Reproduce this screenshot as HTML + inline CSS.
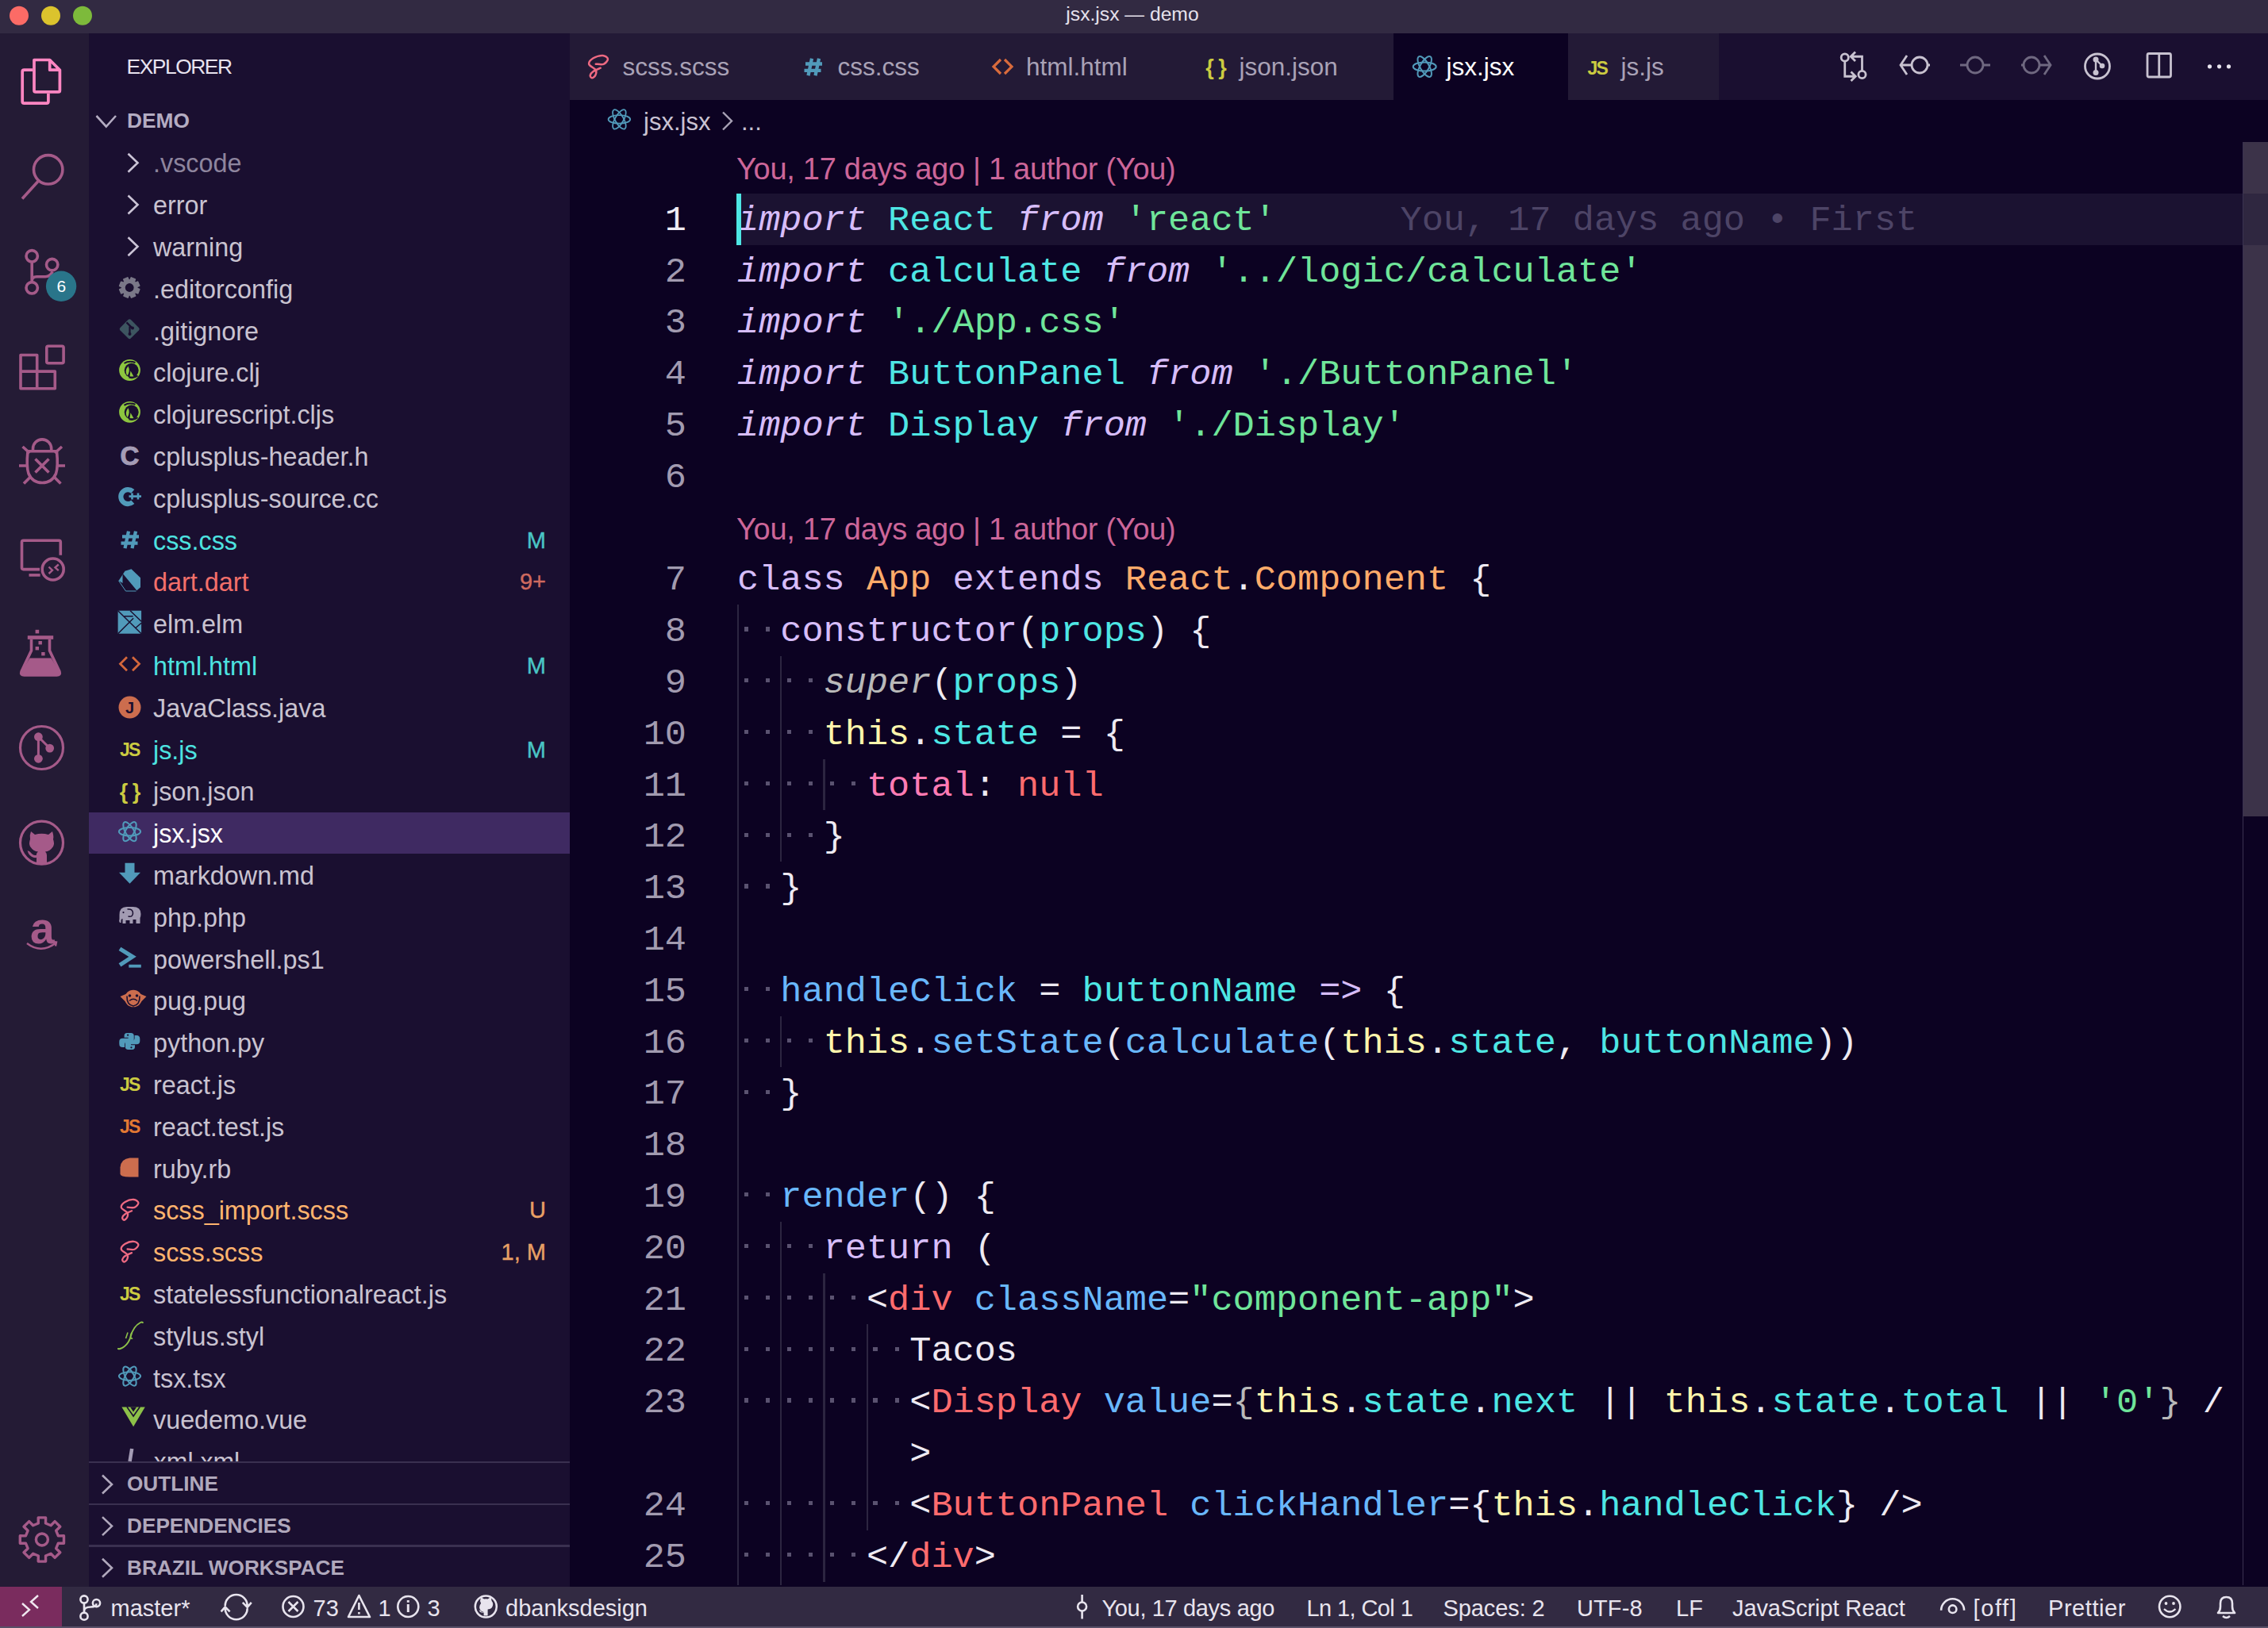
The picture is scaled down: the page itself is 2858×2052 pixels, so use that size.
<!DOCTYPE html><html><head><meta charset="utf-8"><title>jsx.jsx — demo</title><style>
html,body{margin:0;padding:0;background:#0c0222;}body{width:2858px;height:2052px;position:relative;overflow:hidden;font-family:"Liberation Sans",sans-serif;}
</style></head><body>
<div style="position:absolute;left:0.00px;top:0.00px;width:2858.00px;height:42.00px;background:#322a42;"></div>
<div style="position:absolute;left:1343.30px;top:4.44px;font-family:'Liberation Sans', sans-serif;font-size:24.70px;line-height:27.59px;color:#e6e1ec;white-space:pre;">jsx.jsx — demo</div>
<div style="position:absolute;left:0.00px;top:42.00px;width:112.00px;height:1958.00px;background:#241b35;"></div>
<div style="position:absolute;left:112.00px;top:42.00px;width:606.00px;height:1958.00px;background:#1a0f30;"></div>
<div style="position:absolute;left:718.00px;top:42.00px;width:2140.00px;height:1958.00px;background:#0c0222;"></div>
<div style="position:absolute;left:718.00px;top:42.00px;width:2140.00px;height:84.00px;background:#1a0f30;"></div>
<div style="position:absolute;left:0.00px;top:2000.00px;width:2858.00px;height:52.00px;background:#322a42;"></div>
<div style="position:absolute;left:0.00px;top:2000.00px;width:78.00px;height:52.00px;background:#7a2c5e;"></div>
<div style="position:absolute;left:0.00px;top:2050.00px;width:2858.00px;height:2.00px;background:#585068;"></div>
<div style="position:absolute;left:159.50px;top:70.40px;font-family:'Liberation Sans', sans-serif;font-size:26.40px;line-height:29.49px;color:#e8e3ef;white-space:pre;letter-spacing:-1.45px;">EXPLORER</div>
<div style="position:absolute;left:160.00px;top:138.39px;font-family:'Liberation Sans', sans-serif;font-size:26.30px;line-height:29.38px;color:#b4acc2;white-space:pre;font-weight:700;">DEMO</div>
<div style="position:absolute;left:112px;top:178.8px;width:606px;height:1663.2px;overflow:hidden">
<div style="position:absolute;left:0;top:845.00px;width:606px;height:52px;background:#3f2a62"></div>
</div>
<div style="position:absolute;left:193.00px;top:188.31px;font-family:'Liberation Sans', sans-serif;font-size:32.35px;line-height:36.14px;color:#8e859e;white-space:pre;">.vscode</div>
<div style="position:absolute;left:193.00px;top:241.11px;font-family:'Liberation Sans', sans-serif;font-size:32.35px;line-height:36.14px;color:#c9c3d0;white-space:pre;">error</div>
<div style="position:absolute;left:193.00px;top:293.91px;font-family:'Liberation Sans', sans-serif;font-size:32.35px;line-height:36.14px;color:#c9c3d0;white-space:pre;">warning</div>
<div style="position:absolute;left:193.00px;top:346.71px;font-family:'Liberation Sans', sans-serif;font-size:32.35px;line-height:36.14px;color:#c9c3d0;white-space:pre;">.editorconfig</div>
<div style="position:absolute;left:193.00px;top:399.51px;font-family:'Liberation Sans', sans-serif;font-size:32.35px;line-height:36.14px;color:#c9c3d0;white-space:pre;">.gitignore</div>
<div style="position:absolute;left:193.00px;top:452.31px;font-family:'Liberation Sans', sans-serif;font-size:32.35px;line-height:36.14px;color:#c9c3d0;white-space:pre;">clojure.clj</div>
<div style="position:absolute;left:193.00px;top:505.11px;font-family:'Liberation Sans', sans-serif;font-size:32.35px;line-height:36.14px;color:#c9c3d0;white-space:pre;">clojurescript.cljs</div>
<div style="position:absolute;left:193.00px;top:557.91px;font-family:'Liberation Sans', sans-serif;font-size:32.35px;line-height:36.14px;color:#c9c3d0;white-space:pre;">cplusplus-header.h</div>
<div style="position:absolute;left:193.00px;top:610.71px;font-family:'Liberation Sans', sans-serif;font-size:32.35px;line-height:36.14px;color:#c9c3d0;white-space:pre;">cplusplus-source.cc</div>
<div style="position:absolute;left:193.00px;top:663.51px;font-family:'Liberation Sans', sans-serif;font-size:32.35px;line-height:36.14px;color:#4de3e0;white-space:pre;">css.css</div>
<div style="position:absolute;right:2170.00px;top:664.55px;font-family:'Liberation Sans', sans-serif;font-size:29px;line-height:32.40px;color:#4ac5c5;white-space:pre;-webkit-text-stroke:0.35px #4ac5c5">M</div>
<div style="position:absolute;left:193.00px;top:716.31px;font-family:'Liberation Sans', sans-serif;font-size:32.35px;line-height:36.14px;color:#f36f6a;white-space:pre;">dart.dart</div>
<div style="position:absolute;right:2170.00px;top:717.35px;font-family:'Liberation Sans', sans-serif;font-size:29px;line-height:32.40px;color:#cf6a5f;white-space:pre;-webkit-text-stroke:0.35px #cf6a5f">9+</div>
<div style="position:absolute;left:193.00px;top:769.11px;font-family:'Liberation Sans', sans-serif;font-size:32.35px;line-height:36.14px;color:#c9c3d0;white-space:pre;">elm.elm</div>
<div style="position:absolute;left:193.00px;top:821.91px;font-family:'Liberation Sans', sans-serif;font-size:32.35px;line-height:36.14px;color:#4de3e0;white-space:pre;">html.html</div>
<div style="position:absolute;right:2170.00px;top:822.95px;font-family:'Liberation Sans', sans-serif;font-size:29px;line-height:32.40px;color:#4ac5c5;white-space:pre;-webkit-text-stroke:0.35px #4ac5c5">M</div>
<div style="position:absolute;left:193.00px;top:874.71px;font-family:'Liberation Sans', sans-serif;font-size:32.35px;line-height:36.14px;color:#c9c3d0;white-space:pre;">JavaClass.java</div>
<div style="position:absolute;left:193.00px;top:927.51px;font-family:'Liberation Sans', sans-serif;font-size:32.35px;line-height:36.14px;color:#4de3e0;white-space:pre;">js.js</div>
<div style="position:absolute;right:2170.00px;top:928.55px;font-family:'Liberation Sans', sans-serif;font-size:29px;line-height:32.40px;color:#4ac5c5;white-space:pre;-webkit-text-stroke:0.35px #4ac5c5">M</div>
<div style="position:absolute;left:193.00px;top:980.31px;font-family:'Liberation Sans', sans-serif;font-size:32.35px;line-height:36.14px;color:#c9c3d0;white-space:pre;">json.json</div>
<div style="position:absolute;left:193.00px;top:1033.11px;font-family:'Liberation Sans', sans-serif;font-size:32.35px;line-height:36.14px;color:#ffffff;white-space:pre;">jsx.jsx</div>
<div style="position:absolute;left:193.00px;top:1085.91px;font-family:'Liberation Sans', sans-serif;font-size:32.35px;line-height:36.14px;color:#c9c3d0;white-space:pre;">markdown.md</div>
<div style="position:absolute;left:193.00px;top:1138.71px;font-family:'Liberation Sans', sans-serif;font-size:32.35px;line-height:36.14px;color:#c9c3d0;white-space:pre;">php.php</div>
<div style="position:absolute;left:193.00px;top:1191.51px;font-family:'Liberation Sans', sans-serif;font-size:32.35px;line-height:36.14px;color:#c9c3d0;white-space:pre;">powershell.ps1</div>
<div style="position:absolute;left:193.00px;top:1244.31px;font-family:'Liberation Sans', sans-serif;font-size:32.35px;line-height:36.14px;color:#c9c3d0;white-space:pre;">pug.pug</div>
<div style="position:absolute;left:193.00px;top:1297.11px;font-family:'Liberation Sans', sans-serif;font-size:32.35px;line-height:36.14px;color:#c9c3d0;white-space:pre;">python.py</div>
<div style="position:absolute;left:193.00px;top:1349.91px;font-family:'Liberation Sans', sans-serif;font-size:32.35px;line-height:36.14px;color:#c9c3d0;white-space:pre;">react.js</div>
<div style="position:absolute;left:193.00px;top:1402.71px;font-family:'Liberation Sans', sans-serif;font-size:32.35px;line-height:36.14px;color:#c9c3d0;white-space:pre;">react.test.js</div>
<div style="position:absolute;left:193.00px;top:1455.51px;font-family:'Liberation Sans', sans-serif;font-size:32.35px;line-height:36.14px;color:#c9c3d0;white-space:pre;">ruby.rb</div>
<div style="position:absolute;left:193.00px;top:1508.31px;font-family:'Liberation Sans', sans-serif;font-size:32.35px;line-height:36.14px;color:#ffb46e;white-space:pre;">scss_import.scss</div>
<div style="position:absolute;right:2170.00px;top:1509.35px;font-family:'Liberation Sans', sans-serif;font-size:29px;line-height:32.40px;color:#e8a065;white-space:pre;-webkit-text-stroke:0.35px #e8a065">U</div>
<div style="position:absolute;left:193.00px;top:1561.11px;font-family:'Liberation Sans', sans-serif;font-size:32.35px;line-height:36.14px;color:#ffb46e;white-space:pre;">scss.scss</div>
<div style="position:absolute;right:2170.00px;top:1562.15px;font-family:'Liberation Sans', sans-serif;font-size:29px;line-height:32.40px;color:#e8a065;white-space:pre;-webkit-text-stroke:0.35px #e8a065">1, M</div>
<div style="position:absolute;left:193.00px;top:1613.91px;font-family:'Liberation Sans', sans-serif;font-size:32.35px;line-height:36.14px;color:#c9c3d0;white-space:pre;">statelessfunctionalreact.js</div>
<div style="position:absolute;left:193.00px;top:1666.71px;font-family:'Liberation Sans', sans-serif;font-size:32.35px;line-height:36.14px;color:#c9c3d0;white-space:pre;">stylus.styl</div>
<div style="position:absolute;left:193.00px;top:1719.51px;font-family:'Liberation Sans', sans-serif;font-size:32.35px;line-height:36.14px;color:#c9c3d0;white-space:pre;">tsx.tsx</div>
<div style="position:absolute;left:193.00px;top:1772.31px;font-family:'Liberation Sans', sans-serif;font-size:32.35px;line-height:36.14px;color:#c9c3d0;white-space:pre;">vuedemo.vue</div>
<div style="position:absolute;left:112px;top:1815.60px;width:606px;height:26.40px;overflow:hidden">
<div style="position:absolute;left:81.8px;top:9.83px;font-family:'Liberation Sans', sans-serif;font-size:32px;line-height:35.75px;color:#c9c3d0;white-space:pre">xml.xml</div>
</div>
<div style="position:absolute;left:112.00px;top:1842.00px;width:606.00px;height:52.60px;background:#1a0f30;"></div>
<div style="position:absolute;left:112.00px;top:1842.00px;width:606.00px;height:2.40px;background:#3a3050;"></div>
<div style="position:absolute;left:160.00px;top:1856.48px;font-family:'Liberation Sans', sans-serif;font-size:26.20px;line-height:29.27px;color:#b0a8bc;white-space:pre;font-weight:700;">OUTLINE</div>
<div style="position:absolute;left:112.00px;top:1894.60px;width:606.00px;height:52.60px;background:#1a0f30;"></div>
<div style="position:absolute;left:112.00px;top:1894.60px;width:606.00px;height:2.40px;background:#3a3050;"></div>
<div style="position:absolute;left:160.00px;top:1909.08px;font-family:'Liberation Sans', sans-serif;font-size:26.20px;line-height:29.27px;color:#b0a8bc;white-space:pre;font-weight:700;">DEPENDENCIES</div>
<div style="position:absolute;left:112.00px;top:1947.20px;width:606.00px;height:52.80px;background:#1a0f30;"></div>
<div style="position:absolute;left:112.00px;top:1947.20px;width:606.00px;height:2.40px;background:#3a3050;"></div>
<div style="position:absolute;left:160.00px;top:1961.68px;font-family:'Liberation Sans', sans-serif;font-size:26.20px;line-height:29.27px;color:#b0a8bc;white-space:pre;font-weight:700;">BRAZIL WORKSPACE</div>
<div style="position:absolute;left:718.00px;top:42.00px;width:271.00px;height:84.00px;background:#231a36;"></div>
<div style="position:absolute;left:784.50px;top:67.28px;font-family:'Liberation Sans', sans-serif;font-size:31.50px;line-height:35.19px;color:#a9a2b6;white-space:pre;">scss.scss</div>
<div style="position:absolute;left:989.00px;top:42.00px;width:237.50px;height:84.00px;background:#231a36;"></div>
<div style="position:absolute;left:1055.50px;top:67.28px;font-family:'Liberation Sans', sans-serif;font-size:31.50px;line-height:35.19px;color:#a9a2b6;white-space:pre;">css.css</div>
<div style="position:absolute;left:1226.50px;top:42.00px;width:268.50px;height:84.00px;background:#231a36;"></div>
<div style="position:absolute;left:1293.00px;top:67.28px;font-family:'Liberation Sans', sans-serif;font-size:31.50px;line-height:35.19px;color:#a9a2b6;white-space:pre;">html.html</div>
<div style="position:absolute;left:1495.00px;top:42.00px;width:261.00px;height:84.00px;background:#231a36;"></div>
<div style="position:absolute;left:1561.50px;top:67.28px;font-family:'Liberation Sans', sans-serif;font-size:31.50px;line-height:35.19px;color:#a9a2b6;white-space:pre;">json.json</div>
<div style="position:absolute;left:1756.00px;top:42.00px;width:220.00px;height:84.00px;background:#0c0222;"></div>
<div style="position:absolute;left:1822.50px;top:67.28px;font-family:'Liberation Sans', sans-serif;font-size:31.50px;line-height:35.19px;color:#ffffff;white-space:pre;">jsx.jsx</div>
<div style="position:absolute;left:1976.00px;top:42.00px;width:190.00px;height:84.00px;background:#231a36;"></div>
<div style="position:absolute;left:2042.50px;top:67.28px;font-family:'Liberation Sans', sans-serif;font-size:31.50px;line-height:35.19px;color:#a9a2b6;white-space:pre;">js.js</div>
<div style="position:absolute;left:811.00px;top:136.94px;font-family:'Liberation Sans', sans-serif;font-size:31.00px;line-height:34.63px;color:#c9c2d3;white-space:pre;">jsx.jsx</div>
<div style="position:absolute;left:934.00px;top:136.94px;font-family:'Liberation Sans', sans-serif;font-size:31.00px;line-height:34.63px;color:#c9c2d3;white-space:pre;">...</div>
<div style="position:absolute;left:928.00px;top:243.80px;width:1898.00px;height:64.80px;background:#1b1231;"></div>
<div style="position:absolute;left:928.00px;top:191.90px;font-family:'Liberation Sans', sans-serif;font-size:38.00px;line-height:42.45px;color:#cc6699;white-space:pre;letter-spacing:-0.28px;">You, 17 days ago | 1 author (You)</div>
<div style="position:absolute;left:928.00px;top:645.50px;font-family:'Liberation Sans', sans-serif;font-size:38.00px;line-height:42.45px;color:#cc6699;white-space:pre;letter-spacing:-0.28px;">You, 17 days ago | 1 author (You)</div>
<div style="position:absolute;left:928.80px;top:762.20px;width:2.20px;height:1235.74px;background:#2c2540;"></div>
<div style="position:absolute;left:983.10px;top:827.00px;width:2.20px;height:259.20px;background:#2c2540;"></div>
<div style="position:absolute;left:983.10px;top:1280.60px;width:2.20px;height:64.80px;background:#2c2540;"></div>
<div style="position:absolute;left:983.10px;top:1539.80px;width:2.20px;height:458.14px;background:#2c2540;"></div>
<div style="position:absolute;left:1037.40px;top:956.60px;width:2.20px;height:64.80px;background:#2c2540;"></div>
<div style="position:absolute;left:1037.40px;top:1604.60px;width:2.20px;height:389.45px;background:#2c2540;"></div>
<div style="position:absolute;left:1091.70px;top:1669.40px;width:2.20px;height:259.20px;background:#2c2540;"></div>
<div style="position:absolute;right:1993.00px;top:252.83px;font-family:'Liberation Mono', monospace;font-size:45.25px;line-height:51.26px;color:#f0ecf5;white-space:pre">1</div>
<div style="position:absolute;left:929.00px;top:252.83px;font-family:'Liberation Mono', monospace;font-size:45.250px;line-height:51.26px;white-space:pre"><span style="color:#d7bdf9;font-style:italic">import</span> <span style="color:#4ee6e4">React</span> <span style="color:#d7bdf9;font-style:italic">from</span> <span style="color:#6fe59a">'react'</span></div>
<div style="position:absolute;right:1993.00px;top:317.63px;font-family:'Liberation Mono', monospace;font-size:45.25px;line-height:51.26px;color:#a29bb0;white-space:pre">2</div>
<div style="position:absolute;left:929.00px;top:317.63px;font-family:'Liberation Mono', monospace;font-size:45.250px;line-height:51.26px;white-space:pre"><span style="color:#d7bdf9;font-style:italic">import</span> <span style="color:#4ee6e4">calculate</span> <span style="color:#d7bdf9;font-style:italic">from</span> <span style="color:#6fe59a">'../logic/calculate'</span></div>
<div style="position:absolute;right:1993.00px;top:382.43px;font-family:'Liberation Mono', monospace;font-size:45.25px;line-height:51.26px;color:#a29bb0;white-space:pre">3</div>
<div style="position:absolute;left:929.00px;top:382.43px;font-family:'Liberation Mono', monospace;font-size:45.250px;line-height:51.26px;white-space:pre"><span style="color:#d7bdf9;font-style:italic">import</span> <span style="color:#6fe59a">'./App.css'</span></div>
<div style="position:absolute;right:1993.00px;top:447.23px;font-family:'Liberation Mono', monospace;font-size:45.25px;line-height:51.26px;color:#a29bb0;white-space:pre">4</div>
<div style="position:absolute;left:929.00px;top:447.23px;font-family:'Liberation Mono', monospace;font-size:45.250px;line-height:51.26px;white-space:pre"><span style="color:#d7bdf9;font-style:italic">import</span> <span style="color:#4ee6e4">ButtonPanel</span> <span style="color:#d7bdf9;font-style:italic">from</span> <span style="color:#6fe59a">'./ButtonPanel'</span></div>
<div style="position:absolute;right:1993.00px;top:512.03px;font-family:'Liberation Mono', monospace;font-size:45.25px;line-height:51.26px;color:#a29bb0;white-space:pre">5</div>
<div style="position:absolute;left:929.00px;top:512.03px;font-family:'Liberation Mono', monospace;font-size:45.250px;line-height:51.26px;white-space:pre"><span style="color:#d7bdf9;font-style:italic">import</span> <span style="color:#4ee6e4">Display</span> <span style="color:#d7bdf9;font-style:italic">from</span> <span style="color:#6fe59a">'./Display'</span></div>
<div style="position:absolute;right:1993.00px;top:576.83px;font-family:'Liberation Mono', monospace;font-size:45.25px;line-height:51.26px;color:#a29bb0;white-space:pre">6</div>
<div style="position:absolute;right:1993.00px;top:706.43px;font-family:'Liberation Mono', monospace;font-size:45.25px;line-height:51.26px;color:#a29bb0;white-space:pre">7</div>
<div style="position:absolute;left:929.00px;top:706.43px;font-family:'Liberation Mono', monospace;font-size:45.250px;line-height:51.26px;white-space:pre"><span style="color:#d7bdf9">class</span> <span style="color:#ffab6a">App</span> <span style="color:#d7bdf9">extends</span> <span style="color:#ffab6a">React</span><span style="color:#eeeaf2">.</span><span style="color:#ffab6a">Component</span> <span style="color:#eeeaf2">{</span></div>
<div style="position:absolute;right:1993.00px;top:771.23px;font-family:'Liberation Mono', monospace;font-size:45.25px;line-height:51.26px;color:#a29bb0;white-space:pre">8</div>
<div style="position:absolute;left:937.50px;top:790.40px;width:5.20px;height:5.20px;background:#5a5270;"></div>
<div style="position:absolute;left:964.65px;top:790.40px;width:5.20px;height:5.20px;background:#5a5270;"></div>
<div style="position:absolute;left:929.00px;top:771.23px;font-family:'Liberation Mono', monospace;font-size:45.250px;line-height:51.26px;white-space:pre">  <span style="color:#d7bdf9">constructor</span><span style="color:#eeeaf2">(</span><span style="color:#4ee6e4">props</span><span style="color:#eeeaf2">)</span> <span style="color:#eeeaf2">{</span></div>
<div style="position:absolute;right:1993.00px;top:836.03px;font-family:'Liberation Mono', monospace;font-size:45.25px;line-height:51.26px;color:#a29bb0;white-space:pre">9</div>
<div style="position:absolute;left:937.50px;top:855.20px;width:5.20px;height:5.20px;background:#5a5270;"></div>
<div style="position:absolute;left:964.65px;top:855.20px;width:5.20px;height:5.20px;background:#5a5270;"></div>
<div style="position:absolute;left:991.80px;top:855.20px;width:5.20px;height:5.20px;background:#5a5270;"></div>
<div style="position:absolute;left:1018.95px;top:855.20px;width:5.20px;height:5.20px;background:#5a5270;"></div>
<div style="position:absolute;left:929.00px;top:836.03px;font-family:'Liberation Mono', monospace;font-size:45.250px;line-height:51.26px;white-space:pre">    <span style="color:#b9b9b9;font-style:italic">super</span><span style="color:#eeeaf2">(</span><span style="color:#4ee6e4">props</span><span style="color:#eeeaf2">)</span></div>
<div style="position:absolute;right:1993.00px;top:900.83px;font-family:'Liberation Mono', monospace;font-size:45.25px;line-height:51.26px;color:#a29bb0;white-space:pre">10</div>
<div style="position:absolute;left:937.50px;top:920.00px;width:5.20px;height:5.20px;background:#5a5270;"></div>
<div style="position:absolute;left:964.65px;top:920.00px;width:5.20px;height:5.20px;background:#5a5270;"></div>
<div style="position:absolute;left:991.80px;top:920.00px;width:5.20px;height:5.20px;background:#5a5270;"></div>
<div style="position:absolute;left:1018.95px;top:920.00px;width:5.20px;height:5.20px;background:#5a5270;"></div>
<div style="position:absolute;left:929.00px;top:900.83px;font-family:'Liberation Mono', monospace;font-size:45.250px;line-height:51.26px;white-space:pre">    <span style="color:#fff6ac">this</span><span style="color:#eeeaf2">.</span><span style="color:#4ee6e4">state</span> <span style="color:#eeeaf2">=</span> <span style="color:#eeeaf2">{</span></div>
<div style="position:absolute;right:1993.00px;top:965.63px;font-family:'Liberation Mono', monospace;font-size:45.25px;line-height:51.26px;color:#a29bb0;white-space:pre">11</div>
<div style="position:absolute;left:937.50px;top:984.80px;width:5.20px;height:5.20px;background:#5a5270;"></div>
<div style="position:absolute;left:964.65px;top:984.80px;width:5.20px;height:5.20px;background:#5a5270;"></div>
<div style="position:absolute;left:991.80px;top:984.80px;width:5.20px;height:5.20px;background:#5a5270;"></div>
<div style="position:absolute;left:1018.95px;top:984.80px;width:5.20px;height:5.20px;background:#5a5270;"></div>
<div style="position:absolute;left:1046.10px;top:984.80px;width:5.20px;height:5.20px;background:#5a5270;"></div>
<div style="position:absolute;left:1073.25px;top:984.80px;width:5.20px;height:5.20px;background:#5a5270;"></div>
<div style="position:absolute;left:929.00px;top:965.63px;font-family:'Liberation Mono', monospace;font-size:45.250px;line-height:51.26px;white-space:pre">      <span style="color:#ff7bb4">total</span><span style="color:#eeeaf2">:</span> <span style="color:#ff6b6e">null</span></div>
<div style="position:absolute;right:1993.00px;top:1030.43px;font-family:'Liberation Mono', monospace;font-size:45.25px;line-height:51.26px;color:#a29bb0;white-space:pre">12</div>
<div style="position:absolute;left:937.50px;top:1049.60px;width:5.20px;height:5.20px;background:#5a5270;"></div>
<div style="position:absolute;left:964.65px;top:1049.60px;width:5.20px;height:5.20px;background:#5a5270;"></div>
<div style="position:absolute;left:991.80px;top:1049.60px;width:5.20px;height:5.20px;background:#5a5270;"></div>
<div style="position:absolute;left:1018.95px;top:1049.60px;width:5.20px;height:5.20px;background:#5a5270;"></div>
<div style="position:absolute;left:929.00px;top:1030.43px;font-family:'Liberation Mono', monospace;font-size:45.250px;line-height:51.26px;white-space:pre">    <span style="color:#eeeaf2">}</span></div>
<div style="position:absolute;right:1993.00px;top:1095.23px;font-family:'Liberation Mono', monospace;font-size:45.25px;line-height:51.26px;color:#a29bb0;white-space:pre">13</div>
<div style="position:absolute;left:937.50px;top:1114.40px;width:5.20px;height:5.20px;background:#5a5270;"></div>
<div style="position:absolute;left:964.65px;top:1114.40px;width:5.20px;height:5.20px;background:#5a5270;"></div>
<div style="position:absolute;left:929.00px;top:1095.23px;font-family:'Liberation Mono', monospace;font-size:45.250px;line-height:51.26px;white-space:pre">  <span style="color:#eeeaf2">}</span></div>
<div style="position:absolute;right:1993.00px;top:1160.03px;font-family:'Liberation Mono', monospace;font-size:45.25px;line-height:51.26px;color:#a29bb0;white-space:pre">14</div>
<div style="position:absolute;right:1993.00px;top:1224.83px;font-family:'Liberation Mono', monospace;font-size:45.25px;line-height:51.26px;color:#a29bb0;white-space:pre">15</div>
<div style="position:absolute;left:937.50px;top:1244.00px;width:5.20px;height:5.20px;background:#5a5270;"></div>
<div style="position:absolute;left:964.65px;top:1244.00px;width:5.20px;height:5.20px;background:#5a5270;"></div>
<div style="position:absolute;left:929.00px;top:1224.83px;font-family:'Liberation Mono', monospace;font-size:45.250px;line-height:51.26px;white-space:pre">  <span style="color:#69b7fb">handleClick</span> <span style="color:#eeeaf2">=</span> <span style="color:#4ee6e4">buttonName</span> <span style="color:#d7bdf9">=&gt;</span> <span style="color:#eeeaf2">{</span></div>
<div style="position:absolute;right:1993.00px;top:1289.63px;font-family:'Liberation Mono', monospace;font-size:45.25px;line-height:51.26px;color:#a29bb0;white-space:pre">16</div>
<div style="position:absolute;left:937.50px;top:1308.80px;width:5.20px;height:5.20px;background:#5a5270;"></div>
<div style="position:absolute;left:964.65px;top:1308.80px;width:5.20px;height:5.20px;background:#5a5270;"></div>
<div style="position:absolute;left:991.80px;top:1308.80px;width:5.20px;height:5.20px;background:#5a5270;"></div>
<div style="position:absolute;left:1018.95px;top:1308.80px;width:5.20px;height:5.20px;background:#5a5270;"></div>
<div style="position:absolute;left:929.00px;top:1289.63px;font-family:'Liberation Mono', monospace;font-size:45.250px;line-height:51.26px;white-space:pre">    <span style="color:#fff6ac">this</span><span style="color:#eeeaf2">.</span><span style="color:#69b7fb">setState</span><span style="color:#eeeaf2">(</span><span style="color:#69b7fb">calculate</span><span style="color:#eeeaf2">(</span><span style="color:#fff6ac">this</span><span style="color:#eeeaf2">.</span><span style="color:#4ee6e4">state</span><span style="color:#eeeaf2">,</span> <span style="color:#4ee6e4">buttonName</span><span style="color:#eeeaf2">))</span></div>
<div style="position:absolute;right:1993.00px;top:1354.43px;font-family:'Liberation Mono', monospace;font-size:45.25px;line-height:51.26px;color:#a29bb0;white-space:pre">17</div>
<div style="position:absolute;left:937.50px;top:1373.60px;width:5.20px;height:5.20px;background:#5a5270;"></div>
<div style="position:absolute;left:964.65px;top:1373.60px;width:5.20px;height:5.20px;background:#5a5270;"></div>
<div style="position:absolute;left:929.00px;top:1354.43px;font-family:'Liberation Mono', monospace;font-size:45.250px;line-height:51.26px;white-space:pre">  <span style="color:#eeeaf2">}</span></div>
<div style="position:absolute;right:1993.00px;top:1419.23px;font-family:'Liberation Mono', monospace;font-size:45.25px;line-height:51.26px;color:#a29bb0;white-space:pre">18</div>
<div style="position:absolute;right:1993.00px;top:1484.03px;font-family:'Liberation Mono', monospace;font-size:45.25px;line-height:51.26px;color:#a29bb0;white-space:pre">19</div>
<div style="position:absolute;left:937.50px;top:1503.20px;width:5.20px;height:5.20px;background:#5a5270;"></div>
<div style="position:absolute;left:964.65px;top:1503.20px;width:5.20px;height:5.20px;background:#5a5270;"></div>
<div style="position:absolute;left:929.00px;top:1484.03px;font-family:'Liberation Mono', monospace;font-size:45.250px;line-height:51.26px;white-space:pre">  <span style="color:#69b7fb">render</span><span style="color:#eeeaf2">()</span> <span style="color:#eeeaf2">{</span></div>
<div style="position:absolute;right:1993.00px;top:1548.83px;font-family:'Liberation Mono', monospace;font-size:45.25px;line-height:51.26px;color:#a29bb0;white-space:pre">20</div>
<div style="position:absolute;left:937.50px;top:1568.00px;width:5.20px;height:5.20px;background:#5a5270;"></div>
<div style="position:absolute;left:964.65px;top:1568.00px;width:5.20px;height:5.20px;background:#5a5270;"></div>
<div style="position:absolute;left:991.80px;top:1568.00px;width:5.20px;height:5.20px;background:#5a5270;"></div>
<div style="position:absolute;left:1018.95px;top:1568.00px;width:5.20px;height:5.20px;background:#5a5270;"></div>
<div style="position:absolute;left:929.00px;top:1548.83px;font-family:'Liberation Mono', monospace;font-size:45.250px;line-height:51.26px;white-space:pre">    <span style="color:#d7bdf9">return</span> <span style="color:#eeeaf2">(</span></div>
<div style="position:absolute;right:1993.00px;top:1613.63px;font-family:'Liberation Mono', monospace;font-size:45.25px;line-height:51.26px;color:#a29bb0;white-space:pre">21</div>
<div style="position:absolute;left:937.50px;top:1632.80px;width:5.20px;height:5.20px;background:#5a5270;"></div>
<div style="position:absolute;left:964.65px;top:1632.80px;width:5.20px;height:5.20px;background:#5a5270;"></div>
<div style="position:absolute;left:991.80px;top:1632.80px;width:5.20px;height:5.20px;background:#5a5270;"></div>
<div style="position:absolute;left:1018.95px;top:1632.80px;width:5.20px;height:5.20px;background:#5a5270;"></div>
<div style="position:absolute;left:1046.10px;top:1632.80px;width:5.20px;height:5.20px;background:#5a5270;"></div>
<div style="position:absolute;left:1073.25px;top:1632.80px;width:5.20px;height:5.20px;background:#5a5270;"></div>
<div style="position:absolute;left:929.00px;top:1613.63px;font-family:'Liberation Mono', monospace;font-size:45.250px;line-height:51.26px;white-space:pre">      <span style="color:#eeeaf2">&lt;</span><span style="color:#ff6b6e">div</span> <span style="color:#69b7fb">className</span><span style="color:#eeeaf2">=</span><span style="color:#6fe59a">"component-app"</span><span style="color:#eeeaf2">&gt;</span></div>
<div style="position:absolute;right:1993.00px;top:1678.43px;font-family:'Liberation Mono', monospace;font-size:45.25px;line-height:51.26px;color:#a29bb0;white-space:pre">22</div>
<div style="position:absolute;left:937.50px;top:1697.60px;width:5.20px;height:5.20px;background:#5a5270;"></div>
<div style="position:absolute;left:964.65px;top:1697.60px;width:5.20px;height:5.20px;background:#5a5270;"></div>
<div style="position:absolute;left:991.80px;top:1697.60px;width:5.20px;height:5.20px;background:#5a5270;"></div>
<div style="position:absolute;left:1018.95px;top:1697.60px;width:5.20px;height:5.20px;background:#5a5270;"></div>
<div style="position:absolute;left:1046.10px;top:1697.60px;width:5.20px;height:5.20px;background:#5a5270;"></div>
<div style="position:absolute;left:1073.25px;top:1697.60px;width:5.20px;height:5.20px;background:#5a5270;"></div>
<div style="position:absolute;left:1100.40px;top:1697.60px;width:5.20px;height:5.20px;background:#5a5270;"></div>
<div style="position:absolute;left:1127.55px;top:1697.60px;width:5.20px;height:5.20px;background:#5a5270;"></div>
<div style="position:absolute;left:929.00px;top:1678.43px;font-family:'Liberation Mono', monospace;font-size:45.250px;line-height:51.26px;white-space:pre">        <span style="color:#eeeaf2">Tacos</span></div>
<div style="position:absolute;right:1993.00px;top:1743.23px;font-family:'Liberation Mono', monospace;font-size:45.25px;line-height:51.26px;color:#a29bb0;white-space:pre">23</div>
<div style="position:absolute;left:937.50px;top:1762.40px;width:5.20px;height:5.20px;background:#5a5270;"></div>
<div style="position:absolute;left:964.65px;top:1762.40px;width:5.20px;height:5.20px;background:#5a5270;"></div>
<div style="position:absolute;left:991.80px;top:1762.40px;width:5.20px;height:5.20px;background:#5a5270;"></div>
<div style="position:absolute;left:1018.95px;top:1762.40px;width:5.20px;height:5.20px;background:#5a5270;"></div>
<div style="position:absolute;left:1046.10px;top:1762.40px;width:5.20px;height:5.20px;background:#5a5270;"></div>
<div style="position:absolute;left:1073.25px;top:1762.40px;width:5.20px;height:5.20px;background:#5a5270;"></div>
<div style="position:absolute;left:1100.40px;top:1762.40px;width:5.20px;height:5.20px;background:#5a5270;"></div>
<div style="position:absolute;left:1127.55px;top:1762.40px;width:5.20px;height:5.20px;background:#5a5270;"></div>
<div style="position:absolute;left:929.00px;top:1743.23px;font-family:'Liberation Mono', monospace;font-size:45.250px;line-height:51.26px;white-space:pre">        <span style="color:#eeeaf2">&lt;</span><span style="color:#ff6b6e">Display</span> <span style="color:#69b7fb">value</span><span style="color:#eeeaf2">=</span><span style="color:#b9b9b9">{</span><span style="color:#fff6ac">this</span><span style="color:#eeeaf2">.</span><span style="color:#4ee6e4">state</span><span style="color:#eeeaf2">.</span><span style="color:#4ee6e4">next</span> <span style="color:#eeeaf2">||</span> <span style="color:#fff6ac">this</span><span style="color:#eeeaf2">.</span><span style="color:#4ee6e4">state</span><span style="color:#eeeaf2">.</span><span style="color:#4ee6e4">total</span> <span style="color:#eeeaf2">||</span> <span style="color:#6fe59a">'0'</span><span style="color:#b9b9b9">}</span> <span style="color:#eeeaf2">/</span></div>
<div style="position:absolute;left:929.00px;top:1808.03px;font-family:'Liberation Mono', monospace;font-size:45.250px;line-height:51.26px;white-space:pre">        <span style="color:#eeeaf2">&gt;</span></div>
<div style="position:absolute;right:1993.00px;top:1872.83px;font-family:'Liberation Mono', monospace;font-size:45.25px;line-height:51.26px;color:#a29bb0;white-space:pre">24</div>
<div style="position:absolute;left:937.50px;top:1892.00px;width:5.20px;height:5.20px;background:#5a5270;"></div>
<div style="position:absolute;left:964.65px;top:1892.00px;width:5.20px;height:5.20px;background:#5a5270;"></div>
<div style="position:absolute;left:991.80px;top:1892.00px;width:5.20px;height:5.20px;background:#5a5270;"></div>
<div style="position:absolute;left:1018.95px;top:1892.00px;width:5.20px;height:5.20px;background:#5a5270;"></div>
<div style="position:absolute;left:1046.10px;top:1892.00px;width:5.20px;height:5.20px;background:#5a5270;"></div>
<div style="position:absolute;left:1073.25px;top:1892.00px;width:5.20px;height:5.20px;background:#5a5270;"></div>
<div style="position:absolute;left:1100.40px;top:1892.00px;width:5.20px;height:5.20px;background:#5a5270;"></div>
<div style="position:absolute;left:1127.55px;top:1892.00px;width:5.20px;height:5.20px;background:#5a5270;"></div>
<div style="position:absolute;left:929.00px;top:1872.83px;font-family:'Liberation Mono', monospace;font-size:45.250px;line-height:51.26px;white-space:pre">        <span style="color:#eeeaf2">&lt;</span><span style="color:#ff6b6e">ButtonPanel</span> <span style="color:#69b7fb">clickHandler</span><span style="color:#eeeaf2">=</span><span style="color:#eeeaf2">{</span><span style="color:#fff6ac">this</span><span style="color:#eeeaf2">.</span><span style="color:#4ee6e4">handleClick</span><span style="color:#eeeaf2">}</span> <span style="color:#eeeaf2">/&gt;</span></div>
<div style="position:absolute;right:1993.00px;top:1937.63px;font-family:'Liberation Mono', monospace;font-size:45.25px;line-height:51.26px;color:#a29bb0;white-space:pre">25</div>
<div style="position:absolute;left:937.50px;top:1956.80px;width:5.20px;height:5.20px;background:#5a5270;"></div>
<div style="position:absolute;left:964.65px;top:1956.80px;width:5.20px;height:5.20px;background:#5a5270;"></div>
<div style="position:absolute;left:991.80px;top:1956.80px;width:5.20px;height:5.20px;background:#5a5270;"></div>
<div style="position:absolute;left:1018.95px;top:1956.80px;width:5.20px;height:5.20px;background:#5a5270;"></div>
<div style="position:absolute;left:1046.10px;top:1956.80px;width:5.20px;height:5.20px;background:#5a5270;"></div>
<div style="position:absolute;left:1073.25px;top:1956.80px;width:5.20px;height:5.20px;background:#5a5270;"></div>
<div style="position:absolute;left:929.00px;top:1937.63px;font-family:'Liberation Mono', monospace;font-size:45.250px;line-height:51.26px;white-space:pre">      <span style="color:#eeeaf2">&lt;/</span><span style="color:#ff6b6e">div</span><span style="color:#eeeaf2">&gt;</span></div>
<div style="position:absolute;left:1764.50px;top:252.83px;font-family:'Liberation Mono', monospace;font-size:45.25px;line-height:51.26px;color:#4d4466;white-space:pre;">You, 17 days ago • First</div>
<div style="position:absolute;left:928.00px;top:243.80px;width:6.00px;height:64.80px;background:#4ee6e4;"></div>
<div style="position:absolute;left:2826.00px;top:178.50px;width:1.40px;height:1819.50px;background:#3a3250;"></div>
<div style="position:absolute;left:2827.00px;top:178.50px;width:31.00px;height:850.50px;background:#3c3349;"></div>
<div style="position:absolute;left:2827.00px;top:243.80px;width:31.00px;height:64.80px;background:#2f2740;"></div>
<div style="position:absolute;left:139.50px;top:2010.55px;font-family:'Liberation Sans', sans-serif;font-size:29.00px;line-height:32.40px;color:#e8e4ee;white-space:pre;">master*</div>
<div style="position:absolute;left:394.50px;top:2010.55px;font-family:'Liberation Sans', sans-serif;font-size:29.00px;line-height:32.40px;color:#e8e4ee;white-space:pre;">73</div>
<div style="position:absolute;left:476.50px;top:2010.55px;font-family:'Liberation Sans', sans-serif;font-size:29.00px;line-height:32.40px;color:#e8e4ee;white-space:pre;">1</div>
<div style="position:absolute;left:538.50px;top:2010.55px;font-family:'Liberation Sans', sans-serif;font-size:29.00px;line-height:32.40px;color:#e8e4ee;white-space:pre;">3</div>
<div style="position:absolute;left:637.00px;top:2010.55px;font-family:'Liberation Sans', sans-serif;font-size:29.00px;line-height:32.40px;color:#e8e4ee;white-space:pre;">dbanksdesign</div>
<div style="position:absolute;left:1388.50px;top:2010.55px;font-family:'Liberation Sans', sans-serif;font-size:29.00px;line-height:32.40px;color:#e8e4ee;white-space:pre;letter-spacing:-0.35px;">You, 17 days ago</div>
<div style="position:absolute;left:1646.50px;top:2010.55px;font-family:'Liberation Sans', sans-serif;font-size:29.00px;line-height:32.40px;color:#e8e4ee;white-space:pre;letter-spacing:-0.60px;">Ln 1, Col 1</div>
<div style="position:absolute;left:1818.50px;top:2010.55px;font-family:'Liberation Sans', sans-serif;font-size:29.00px;line-height:32.40px;color:#e8e4ee;white-space:pre;letter-spacing:-0.10px;">Spaces: 2</div>
<div style="position:absolute;left:1987.00px;top:2010.55px;font-family:'Liberation Sans', sans-serif;font-size:29.00px;line-height:32.40px;color:#e8e4ee;white-space:pre;letter-spacing:0.10px;">UTF-8</div>
<div style="position:absolute;left:2112.00px;top:2010.55px;font-family:'Liberation Sans', sans-serif;font-size:29.00px;line-height:32.40px;color:#e8e4ee;white-space:pre;">LF</div>
<div style="position:absolute;left:2183.00px;top:2010.55px;font-family:'Liberation Sans', sans-serif;font-size:29.00px;line-height:32.40px;color:#e8e4ee;white-space:pre;letter-spacing:-0.10px;">JavaScript React</div>
<div style="position:absolute;left:2486.50px;top:2010.55px;font-family:'Liberation Sans', sans-serif;font-size:29.00px;line-height:32.40px;color:#e8e4ee;white-space:pre;letter-spacing:1.60px;">[off]</div>
<div style="position:absolute;left:2581.00px;top:2010.55px;font-family:'Liberation Sans', sans-serif;font-size:29.00px;line-height:32.40px;color:#e8e4ee;white-space:pre;letter-spacing:0.55px;">Prettier</div>
<svg style="position:absolute;left:0;top:0" width="2858" height="2052" viewBox="0 0 2858 2052">
<circle cx="24" cy="19.7" r="12" fill="#fc6b66"/>
<circle cx="64" cy="19.7" r="12" fill="#dbc32d"/>
<circle cx="104" cy="19.7" r="12" fill="#7dba3b"/>
<path d="M41.2 88.2 H30.4 q-2.2 0 -2.2 2.2 V128 q0 2.2 2.2 2.2 H58.7 q2.2 0 2.2 -2.2 V117.7" fill="none" stroke="#ff86c2" stroke-width="3.7"/>
<path d="M43 75.5 H62.7 L75.4 88.2 V113.9 q0 2 -2 2 H45 q-2 0 -2 -2 Z M62.7 75.5 V88.2 H75.4" fill="none" stroke="#ff86c2" stroke-width="3.7" stroke-linejoin="round"/>
<circle cx="60.7" cy="213.8" r="18.2" fill="none" stroke="#a55a89" stroke-width="3.6"/>
<line x1="48" y1="228.5" x2="28" y2="250.5" stroke="#a55a89" stroke-width="3.6"/>
<circle cx="40.2" cy="322.8" r="7.2" fill="none" stroke="#a55a89" stroke-width="3.6"/>
<circle cx="65.7" cy="333.6" r="7.2" fill="none" stroke="#a55a89" stroke-width="3.6"/>
<circle cx="40.2" cy="362.8" r="7.2" fill="none" stroke="#a55a89" stroke-width="3.6"/>
<path d="M40.2 330 V355.6 M40.2 354 q0 -5.3 6 -5.3 h11 q6 0 9 -6.5" fill="none" stroke="#a55a89" stroke-width="3.6"/>
<circle cx="77.1" cy="360.8" r="19.2" fill="#29758a"/>
<text x="77.3" y="368.2" font-family="Liberation Sans" font-size="21.0" font-weight="400" fill="#ffffff" letter-spacing="0.0" text-anchor="middle" >6</text>
<path d="M26 447.5 H46.7 V468.1 H69.3 V489.7 H26 Z M46.7 468.1 V489.7 M26 468.1 H46.7" fill="none" stroke="#a55a89" stroke-width="3.6" stroke-linejoin="round"/>
<rect x="58.8" y="436.2" width="21.3" height="21.5" rx="2" fill="none" stroke="#a55a89" stroke-width="3.6"/>
<path d="M41.5 568.7 V565.5 A11.6 11.6 0 0 1 64.7 565.5 V568.7" fill="none" stroke="#a55a89" stroke-width="3.6"/>
<path d="M35 568.7 H71.5 Q73.5 588 70.5 597 Q65.5 608.5 53.2 608.5 Q41 608.5 36 597 Q33 588 35 568.7 Z" fill="none" stroke="#a55a89" stroke-width="3.6" stroke-linejoin="round"/>
<path d="M28.5 563 L37.5 571 M78 563 L69 571 M24 587 H34 M72.5 587 H82 M30 609.5 L38.5 601 M76.5 609.5 L68 601 M44.5 578.5 L61.5 595.5 M61.5 578.5 L44.5 595.5" fill="none" stroke="#a55a89" stroke-width="3.6"/>
<path d="M50 717.6 H29.5 q-2 0 -2 -2 V683.3 q0 -2 2 -2 H74.3 q2 0 2 2 V699.8" fill="none" stroke="#a55a89" stroke-width="3.6"/>
<line x1="36.5" y1="724.9" x2="50.6" y2="724.9" stroke="#a55a89" stroke-width="3.6"/>
<circle cx="66.7" cy="717.5" r="13.5" fill="none" stroke="#a55a89" stroke-width="3.6"/>
<path d="M61.5 714.5 L66 718.8 L61.5 723 M73.8 711.5 L69.5 715.3 L73.8 719.2" fill="none" stroke="#a55a89" stroke-width="2.4"/>
<rect x="44.6" y="793.8" width="4.6" height="4.6" fill="#a55a89"/>
<rect x="34.8" y="801.2" width="32.4" height="4.6" fill="#a55a89"/>
<path d="M39.5 805.8 V820 L27 846.5 q-1.5 4.5 3.5 4.5 H71.5 q5 0 3.5 -4.5 L62.5 820 V805.8" fill="none" stroke="#a55a89" stroke-width="3.6"/>
<path d="M37.5 829.5 H64.5 L75 847 q1 3.5 -3 3.5 H30 q-4 0 -3 -3.5Z" fill="#a55a89"/>
<rect x="48.5" y="808" width="4.4" height="4.4" fill="#a55a89"/><rect x="44.6" y="815" width="4.4" height="4.4" fill="#a55a89"/><rect x="52.2" y="822" width="4.4" height="4.4" fill="#a55a89"/>
<circle cx="52.5" cy="942.5" r="27" fill="none" stroke="#a55a89" stroke-width="3.2"/>
<path d="M48.4 928.7 V956.3 M48.4 928.7 L62.7 943.1" fill="none" stroke="#a55a89" stroke-width="3"/>
<circle cx="48.4" cy="928.7" r="5.4" fill="#a55a89"/>
<circle cx="62.7" cy="943.1" r="5.4" fill="#a55a89"/>
<circle cx="48.4" cy="956.3" r="5.4" fill="#a55a89"/>
<circle cx="52.5" cy="1062.2" r="27" fill="none" stroke="#a55a89" stroke-width="3.2"/>
<path d="M39 1048 L44 1052 Q52.5 1049.5 61 1052 L66 1048 Q68 1054 67 1058 Q69 1063 67 1067 Q63 1073 57 1073.5 Q59 1075 59 1078 V1089.5 Q52.5 1090.5 46 1089.5 V1081 Q40 1082 36 1076 Q35 1073.5 34.6 1072 Q38 1073 40 1076 Q43 1079 46 1077.5 V1077 Q46 1074.5 48 1073.5 Q42 1073 38 1067 Q36 1063 38 1058 Q37 1053 39 1048 Z" fill="#a55a89"/>
<text x="53.3" y="1189.0" font-family="Liberation Sans" font-size="55.0" font-weight="700" fill="#a55a89" letter-spacing="0.0" text-anchor="middle" >a</text>
<path d="M34 1189 q18 14 37 -1 M66 1187 l5 0.5 l-1 5" fill="none" stroke="#a55a89" stroke-width="2.4"/>
<g transform="translate(52.9 1940.5)">
<polygon points="27.6,-4.7 27.6,4.7 20.5,4.6 17.8,11.2 22.9,16.2 16.2,22.9 11.2,17.8 4.6,20.5 4.7,27.6 -4.7,27.6 -4.6,20.5 -11.2,17.8 -16.2,22.9 -22.9,16.2 -17.8,11.2 -20.5,4.6 -27.6,4.7 -27.6,-4.7 -20.5,-4.6 -17.8,-11.2 -22.9,-16.2 -16.2,-22.9 -11.2,-17.8 -4.6,-20.5 -4.7,-27.6 4.7,-27.6 4.6,-20.5 11.2,-17.8 16.2,-22.9 22.9,-16.2 17.8,-11.2 20.5,-4.6" fill="none" stroke="#a55a89" stroke-width="3.4" stroke-linejoin="round"/>
<circle r="7.5" fill="none" stroke="#a55a89" stroke-width="3.4"/></g>
<polyline points="121.5,146.0 133.8,159.5 146.0,146.0" fill="none" stroke="#b4acc2" stroke-width="2.6"/>
<polyline points="161.5,193.7 173.5,205.2 161.5,216.7" fill="none" stroke="#cbc4d6" stroke-width="2.6"/>
<polyline points="161.5,246.5 173.5,258.0 161.5,269.5" fill="none" stroke="#cbc4d6" stroke-width="2.6"/>
<polyline points="161.5,299.3 173.5,310.8 161.5,322.3" fill="none" stroke="#cbc4d6" stroke-width="2.6"/>
<g transform="translate(163.2 362.5)">
<rect x="-3.6" y="-13.3" width="7.2" height="8" rx="1" fill="#7a7888" transform="rotate(22)"/>
<rect x="-3.6" y="-13.3" width="7.2" height="8" rx="1" fill="#7a7888" transform="rotate(67)"/>
<rect x="-3.6" y="-13.3" width="7.2" height="8" rx="1" fill="#7a7888" transform="rotate(112)"/>
<rect x="-3.6" y="-13.3" width="7.2" height="8" rx="1" fill="#7a7888" transform="rotate(157)"/>
<rect x="-3.6" y="-13.3" width="7.2" height="8" rx="1" fill="#7a7888" transform="rotate(202)"/>
<rect x="-3.6" y="-13.3" width="7.2" height="8" rx="1" fill="#7a7888" transform="rotate(247)"/>
<rect x="-3.6" y="-13.3" width="7.2" height="8" rx="1" fill="#7a7888" transform="rotate(292)"/>
<rect x="-3.6" y="-13.3" width="7.2" height="8" rx="1" fill="#7a7888" transform="rotate(337)"/>
<circle r="10.3" fill="#7a7888"/><circle r="5.4" fill="#1a0f30"/></g>
<rect x="153.7" y="405.2" width="19" height="19" rx="2.5" fill="#3d5560" transform="rotate(45 163.2 414.7)"/>
<path d="M159.5 406.4 l7 7 M163.5 411.4 v9" stroke="#1a0f30" stroke-width="2.2" fill="none"/><circle cx="167.0" cy="413.4" r="2" fill="#1a0f30"/><circle cx="163.5" cy="420.9" r="2" fill="#1a0f30"/>
<circle cx="163.5" cy="466.5" r="13.4" fill="#8dc63f"/>
<circle cx="165.7" cy="466.8" r="9" fill="#1a0f30"/>
<path d="M156.5 458.0 q6 -4 14 -1" stroke="#1a0f30" stroke-width="2" fill="none"/>
<path d="M161.5 461.5 q-5 6 -1 12 q4 -6 1 -12z" fill="#8dc63f"/>
<path d="M164.5 467.5 l4 7 h-5z" fill="#8dc63f"/>
<path d="M162.5 475.5 q6 2 11 -2" stroke="#1a0f30" stroke-width="2" fill="none"/>
<circle cx="163.5" cy="519.3" r="13.4" fill="#8dc63f"/>
<circle cx="165.7" cy="519.6" r="9" fill="#1a0f30"/>
<path d="M156.5 510.8 q6 -4 14 -1" stroke="#1a0f30" stroke-width="2" fill="none"/>
<path d="M161.5 514.3 q-5 6 -1 12 q4 -6 1 -12z" fill="#8dc63f"/>
<path d="M164.5 520.3 l4 7 h-5z" fill="#8dc63f"/>
<path d="M162.5 528.3 q6 2 11 -2" stroke="#1a0f30" stroke-width="2" fill="none"/>
<text x="163.5" y="586.3" font-family="Liberation Sans" font-size="33.0" font-weight="700" fill="#a49cb5" letter-spacing="0.0" text-anchor="middle" stroke="#a49cb5" stroke-width="1">C</text>
<path d="M167.3 619.4 A9 9 0 1 0 167.3 632.8" fill="none" stroke="#519aba" stroke-width="6.2"/>
<path d="M162.5 625.6 h8 M166.5 621.6 v8 M170.0 625.6 h8 M174.0 621.6 v8" stroke="#519aba" stroke-width="2.6"/>
<path d="M162.0 669.6 l-4.5 21.5 M171.0 669.6 l-4.5 21.5 M154.0 676.4 h21 M152.5 684.7 h21" stroke="#519aba" stroke-width="4.3" fill="none"/>
<path d="M149.5 731.9 L157.5 719.7 L165.5 717.2 L177.0 728.2 L177.0 740.2 L171.5 745.0 Z" fill="#519aba"/>
<path d="M154.5 722.7 L173.0 745.0 L158.5 745.0 L154.5 735.2 Z" fill="#1a0f30"/>
<path d="M149.5 731.9 L158.5 745.0 H171.5" stroke="#519aba" stroke-width="1" fill="none"/>
<rect x="148.6" y="769.7" width="29.5" height="29" fill="#519aba"/>
<path d="M148.6 769.7 L178.1 798.7 M148.6 798.7 L168.1 779.2 M164.1 769.7 L178.1 783.2 M156.6 776.7 H167.6 M170.6 791.7 L178.1 785.2" stroke="#1a0f30" stroke-width="1.5" fill="none"/>
<path d="M160.0 828.3 l-8.5 8.5 l8.5 8.5 M167.0 828.3 l8.5 8.5 l-8.5 8.5" stroke="#d4673c" stroke-width="2.8" fill="none"/>
<circle cx="163.5" cy="891.6" r="14" fill="#cc6d4e"/>
<text x="158.0" y="899.1" font-family="Liberation Sans" font-size="20.0" font-weight="700" fill="#1a0f30" letter-spacing="0.0" text-anchor="start" >J</text>
<text x="151.0" y="952.9" font-family="Liberation Sans" font-size="23.0" font-weight="700" fill="#cbcb41" letter-spacing="-1.8" text-anchor="start" >JS</text>
<text x="163.5" y="1006.7" font-family="Liberation Sans" font-size="27.0" font-weight="700" fill="#cbcb41" letter-spacing="-1.0" text-anchor="middle" >{ }</text>
<ellipse cx="163.5" cy="1048.2" rx="13.6" ry="5.3" fill="none" stroke="#519aba" stroke-width="2.0" transform="rotate(0 163.5 1048.2)"/>
<ellipse cx="163.5" cy="1048.2" rx="13.6" ry="5.3" fill="none" stroke="#519aba" stroke-width="2.0" transform="rotate(60 163.5 1048.2)"/>
<ellipse cx="163.5" cy="1048.2" rx="13.6" ry="5.3" fill="none" stroke="#519aba" stroke-width="2.0" transform="rotate(120 163.5 1048.2)"/>
<path d="M157.5 1087.8 h12 v12 h7.5 l-13.5 14 l-13.5 -14 h7.5z" fill="#519aba"/>
<g transform="translate(163.5 1154.1)">
<path d="M-13 -1 q0 -10 9 -10 h8 q10 0 10 9 q0 3 -1 5 v7 h-5 v-5 h-4 v5 h-4 v-4 h-5 v4 h-4 v-6 q-2 0 -2 3 v2 h-1.5 q-1.5 -2 -0.5 -5 z" fill="#a29bb2"/>
<path d="M-3 -8 q7 -1 7 5 q0 5 -6 4" stroke="#1a0f30" stroke-width="1.5" fill="none"/><circle cx="-8" cy="-4" r="1.1" fill="#1a0f30"/></g>
<path d="M151.0 1195.9 L167.0 1205.9 L151.0 1216.4" stroke="#519aba" stroke-width="5.2" fill="none"/>
<rect x="162.3" y="1215.8" width="15.5" height="3.8" fill="#519aba"/>
<g transform="translate(168.0 1258.5)">
<path d="M-6 -7 L-16.5 -2.5 L-8 6z M6 -7 L16.5 -2.5 L8 6z" fill="#cc6d4e"/>
<circle r="10.8" fill="#cc6d4e"/>
<path d="M-8 -3 Q-8.5 8 0 9.5 Q8.5 8 8 -3" stroke="#1a0f30" stroke-width="1.6" fill="none"/>
<circle cx="-4.5" cy="-3.5" r="1.8" fill="#1a0f30"/><circle cx="4.5" cy="-3.5" r="1.8" fill="#1a0f30"/>
<path d="M-5 3 Q0 -1.5 5 3" stroke="#1a0f30" stroke-width="1.4" fill="none"/></g>
<g transform="translate(163.3 1312.5) scale(0.84)">
<path d="M-4 -12.5 h6 q4.5 0 4.5 4.5 v6 q0 2.5 -2.5 2.5 h-7 q-4.5 0 -4.5 4.5 v4 h-3 q-5 0 -5 -5.5 v-3 q0 -5 5 -5 h8.5 v-1.3 h-6 v-2.2 q0 -4.5 4 -4.5 z" fill="#519aba"/><path d="M-4 -12.5 h6 q4.5 0 4.5 4.5 v6 q0 2.5 -2.5 2.5 h-7 q-4.5 0 -4.5 4.5 v4 h-3 q-5 0 -5 -5.5 v-3 q0 -5 5 -5 h8.5 v-1.3 h-6 v-2.2 q0 -4.5 4 -4.5 z" fill="#519aba" transform="rotate(180)"/>
<circle cx="-2.6" cy="-9.3" r="1.3" fill="#1a0f30"/><circle cx="2.6" cy="9.3" r="1.3" fill="#1a0f30"/></g>
<text x="151.0" y="1375.3" font-family="Liberation Sans" font-size="23.0" font-weight="700" fill="#cbcb41" letter-spacing="-1.8" text-anchor="start" >JS</text>
<text x="151.0" y="1428.1" font-family="Liberation Sans" font-size="23.0" font-weight="700" fill="#e37933" letter-spacing="-1.8" text-anchor="start" >JS</text>
<path d="M151.5 1471.4 q1 -11 12 -12 l11 0 v24 l-11 0 q-12 0 -12 -4z" fill="#cc6d4e"/>
<path d="M160.60 1521.70 C162.08 1521.73 167.20 1522.85 169.50 1521.90 C171.80 1520.95 174.57 1517.65 174.40 1516.00 C174.23 1514.35 171.28 1512.17 168.50 1512.00 C165.72 1511.83 160.32 1513.35 157.70 1515.00 C155.08 1516.65 152.32 1519.62 152.80 1521.90 C153.28 1524.18 159.38 1526.58 160.60 1528.70 C161.82 1530.82 160.83 1533.08 160.10 1534.60 C159.37 1536.12 157.18 1537.80 156.20 1537.80 C155.22 1537.80 153.95 1535.87 154.20 1534.60 C154.45 1533.33 155.73 1531.58 157.70 1530.20 C159.67 1528.82 164.62 1526.95 166.00 1526.30" stroke="#ee6a82" stroke-width="2.3" fill="none" stroke-linecap="round"/>
<path d="M160.60 1574.50 C162.08 1574.53 167.20 1575.65 169.50 1574.70 C171.80 1573.75 174.57 1570.45 174.40 1568.80 C174.23 1567.15 171.28 1564.97 168.50 1564.80 C165.72 1564.63 160.32 1566.15 157.70 1567.80 C155.08 1569.45 152.32 1572.42 152.80 1574.70 C153.28 1576.98 159.38 1579.38 160.60 1581.50 C161.82 1583.62 160.83 1585.88 160.10 1587.40 C159.37 1588.92 157.18 1590.60 156.20 1590.60 C155.22 1590.60 153.95 1588.67 154.20 1587.40 C154.45 1586.13 155.73 1584.38 157.70 1583.00 C159.67 1581.62 164.62 1579.75 166.00 1579.10" stroke="#ee6a82" stroke-width="2.3" fill="none" stroke-linecap="round"/>
<text x="151.0" y="1639.3" font-family="Liberation Sans" font-size="23.0" font-weight="700" fill="#cbcb41" letter-spacing="-1.8" text-anchor="start" >JS</text>
<path d="M148.9 1700.0 q3 1 8 -3 q6 -5 8 -13 q3 -12 12 -17 q2 -1 3 0" stroke="#8dc149" stroke-width="1.9" fill="none" stroke-linecap="round"/>
<path d="M161.0 1679.6 l-2.5 7.5 M166.0 1679.6 q-2.5 4 -1 7 q1 1 2 0" stroke="#8dc149" stroke-width="1.6" fill="none"/>
<ellipse cx="163.5" cy="1734.6" rx="13.6" ry="5.3" fill="none" stroke="#519aba" stroke-width="2.0" transform="rotate(0 163.5 1734.6)"/>
<ellipse cx="163.5" cy="1734.6" rx="13.6" ry="5.3" fill="none" stroke="#519aba" stroke-width="2.0" transform="rotate(60 163.5 1734.6)"/>
<ellipse cx="163.5" cy="1734.6" rx="13.6" ry="5.3" fill="none" stroke="#519aba" stroke-width="2.0" transform="rotate(120 163.5 1734.6)"/>
<path d="M153.4 1773.4 H182.8 L168.1 1798.2 Z" fill="#8dc149"/>
<path d="M164.1 1773.4 H172.1 L168.1 1779.4 Z" fill="#1a0f30"/>
<path d="M159.9 1773.2 L168.1 1785.0 L176.3 1773.2" stroke="#1a0f30" stroke-width="1.6" fill="none"/>
<path d="M166.2 1826 L163.6 1842" stroke="#a49cb5" stroke-width="4.5"/>
<polyline points="129.0,1859.5 141.0,1871.0 129.0,1882.5" fill="none" stroke="#b0a8bc" stroke-width="2.6"/>
<polyline points="129.0,1912.1 141.0,1923.6 129.0,1935.1" fill="none" stroke="#b0a8bc" stroke-width="2.6"/>
<polyline points="129.0,1964.7 141.0,1976.2 129.0,1987.7" fill="none" stroke="#b0a8bc" stroke-width="2.6"/>
<path d="M750.81 80.65 C752.44 80.69 758.07 81.92 760.60 80.87 C763.13 79.83 766.17 76.19 765.99 74.38 C765.81 72.56 762.56 70.16 759.50 69.98 C756.44 69.80 750.50 71.47 747.62 73.28 C744.74 75.09 741.70 78.36 742.23 80.87 C742.76 83.38 749.47 86.02 750.81 88.35 C752.15 90.68 751.07 93.17 750.26 94.84 C749.45 96.51 747.05 98.36 745.97 98.36 C744.89 98.36 743.50 96.23 743.77 94.84 C744.04 93.45 745.46 91.52 747.62 90.00 C749.78 88.48 755.23 86.42 756.75 85.71" stroke="#ee6a82" stroke-width="2.5" fill="none" stroke-linecap="round"/>
<path d="M1023.0 73.7 l-4.5 21.5 M1032.0 73.7 l-4.5 21.5 M1015.0 80.5 h21 M1013.5 88.8 h21" stroke="#519aba" stroke-width="4.3" fill="none"/>
<path d="M1261.0 75.0 l-9 9 l9 9 M1266.0 75.0 l9 9 l-9 9" stroke="#d96b3c" stroke-width="3.2" fill="none"/>
<text x="1532.0" y="93.5" font-family="Liberation Sans" font-size="27.0" font-weight="700" fill="#cbcb41" letter-spacing="-1.0" text-anchor="middle" >{ }</text>
<ellipse cx="1795.2" cy="84.0" rx="14.5" ry="5.6" fill="none" stroke="#519aba" stroke-width="2.0" transform="rotate(0 1795.2 84.0)"/>
<ellipse cx="1795.2" cy="84.0" rx="14.5" ry="5.6" fill="none" stroke="#519aba" stroke-width="2.0" transform="rotate(60 1795.2 84.0)"/>
<ellipse cx="1795.2" cy="84.0" rx="14.5" ry="5.6" fill="none" stroke="#519aba" stroke-width="2.0" transform="rotate(120 1795.2 84.0)"/>
<text x="2000.5" y="93.5" font-family="Liberation Sans" font-size="23.0" font-weight="700" fill="#cbcb41" letter-spacing="-1.8" text-anchor="start" >JS</text>
<circle cx="2324.75" cy="72.5" r="4.6" fill="none" stroke="#c8c2d0" stroke-width="2.8"/><circle cx="2346.5" cy="94" r="4.6" fill="none" stroke="#c8c2d0" stroke-width="2.8"/>
<path d="M2324.75 77.1 V96.25 H2338 M2332.5 90.5 l5.75 5.75 l-5.75 5.75 M2346.5 89.4 V71.25 H2332 M2338 65.5 l-5.75 5.75 l5.75 5.75" fill="none" stroke="#c8c2d0" stroke-width="2.8"/>
<circle cx="2419" cy="82" r="10" fill="none" stroke="#c8c2d0" stroke-width="2.8"/><path d="M2395 82 H2409 M2403 70 l-8 12 l8 12 M2429 82 h3" fill="none" stroke="#c8c2d0" stroke-width="2.8"/>
<circle cx="2489" cy="82" r="10" fill="none" stroke="#6f6880" stroke-width="2.8"/><path d="M2470 82 H2479 M2499 82 H2508" fill="none" stroke="#6f6880" stroke-width="2.8"/>
<circle cx="2560" cy="82" r="10" fill="none" stroke="#6f6880" stroke-width="2.8"/><path d="M2547 82 H2550 M2570 82 H2584 M2576 70 l8 12 l-8 12" fill="none" stroke="#6f6880" stroke-width="2.8"/>
<circle cx="2643" cy="83.5" r="15.5" fill="none" stroke="#c8c2d0" stroke-width="2.8"/>
<path d="M2641 75 V91 M2641 75 L2649 83" fill="none" stroke="#c8c2d0" stroke-width="2.4"/>
<circle cx="2641" cy="75" r="3.5" fill="#c8c2d0"/><circle cx="2649" cy="83" r="3.3" fill="#c8c2d0"/><circle cx="2641" cy="91.5" r="3.5" fill="#c8c2d0"/>
<rect x="2706" y="67.5" width="29.5" height="29.5" rx="2" fill="none" stroke="#c8c2d0" stroke-width="2.8"/><line x1="2720.75" y1="67.5" x2="2720.75" y2="97" stroke="#c8c2d0" stroke-width="2.8"/>
<circle cx="2784.5" cy="83.8" r="2.6" fill="#e8e4ee"/>
<circle cx="2796.5" cy="83.8" r="2.6" fill="#e8e4ee"/>
<circle cx="2808.5" cy="83.8" r="2.6" fill="#e8e4ee"/>
<ellipse cx="780.4" cy="150.4" rx="13.8" ry="5.3" fill="none" stroke="#519aba" stroke-width="1.8" transform="rotate(0 780.4 150.4)"/>
<ellipse cx="780.4" cy="150.4" rx="13.8" ry="5.3" fill="none" stroke="#519aba" stroke-width="1.8" transform="rotate(60 780.4 150.4)"/>
<ellipse cx="780.4" cy="150.4" rx="13.8" ry="5.3" fill="none" stroke="#519aba" stroke-width="1.8" transform="rotate(120 780.4 150.4)"/>
<polyline points="911.0,141.5 922.0,152.5 911.0,163.5" fill="none" stroke="#a9a2b6" stroke-width="2.4"/>
<path d="M28 2037 l9 -8 l-9 -8 M48 2011 l-9 8 l9 8" fill="none" stroke="#f0e8f0" stroke-width="2.4"/>
<circle cx="106" cy="2016" r="4.6" fill="none" stroke="#e8e4ee" stroke-width="2.6"/><circle cx="106" cy="2037.2" r="4.6" fill="none" stroke="#e8e4ee" stroke-width="2.6"/><circle cx="121.5" cy="2020.6" r="4.6" fill="none" stroke="#e8e4ee" stroke-width="2.6"/>
<path d="M106 2020.6 V2032.6 M106 2031 q0 -5.5 8 -5.5 q7.5 0 7.5 -4.3" fill="none" stroke="#e8e4ee" stroke-width="2.6"/>
<path d="M283.7 2024 A14 14 0 0 1 311.7 2024 M305.8 2019.8 L311.7 2025.8 L316.8 2019.8 M311.7 2027.2 A14 14 0 0 1 283.7 2027.2 M278.6 2031.4 L283.7 2025.4 L289.6 2031.4" fill="none" stroke="#e8e4ee" stroke-width="2.6"/>
<circle cx="369.5" cy="2025" r="13" fill="none" stroke="#e8e4ee" stroke-width="2.6"/><path d="M363.5 2019 l12 12 M375.5 2019 l-12 12" stroke="#e8e4ee" stroke-width="2.6"/>
<path d="M452.4 2011 L466 2038 H439 Z" fill="none" stroke="#e8e4ee" stroke-width="2.6" stroke-linejoin="round"/><path d="M452.4 2020 v9 M452.4 2032 v2.5" stroke="#e8e4ee" stroke-width="2.6"/>
<circle cx="514.3" cy="2025" r="13" fill="none" stroke="#e8e4ee" stroke-width="2.6"/><path d="M514.3 2022 v10 M514.3 2017 v2.8" stroke="#e8e4ee" stroke-width="3"/>
<circle cx="612.3" cy="2025" r="13.5" fill="none" stroke="#e8e4ee" stroke-width="2.6"/>
<path d="M605 2018 l1 -5 l4 2.5 q2.3 -0.6 4.6 0 l4 -2.5 l1 5 q2 2 1.5 5 q-0.5 5 -6.5 5.5 v8 h-5 v-4 q-4 1 -6 -3 q2 0 3 2 q1 1 3 0.5 q-5 -1 -5.5 -6 q0 -3 2 -5z" fill="#e8e4ee"/>
<circle cx="1363.6" cy="2025" r="5.5" fill="none" stroke="#e8e4ee" stroke-width="2.6"/><path d="M1363.6 2010 v9.5 M1363.6 2030.5 v10" stroke="#e8e4ee" stroke-width="2.6"/>
<path d="M2446.1 2029.8 A14.5 14.5 0 0 1 2475.1 2029.8" fill="none" stroke="#e8e4ee" stroke-width="2.6"/><circle cx="2460.6" cy="2028.2" r="4.8" fill="none" stroke="#e8e4ee" stroke-width="2.6"/>
<circle cx="2734.2" cy="2025" r="13.2" fill="none" stroke="#e8e4ee" stroke-width="2.6"/><circle cx="2729.5" cy="2021" r="1.9" fill="#e8e4ee"/><circle cx="2739" cy="2021" r="1.9" fill="#e8e4ee"/><path d="M2727 2028 q7.2 7 14.4 0" fill="none" stroke="#e8e4ee" stroke-width="2.2"/>
<path d="M2795 2033 q3 -3 3 -8 v-4 q0 -8 7.5 -8 q7.5 0 7.5 8 v4 q0 5 3 8 z M2801 2037 q4.5 4 9 0" fill="none" stroke="#e8e4ee" stroke-width="2.6" stroke-linejoin="round"/>
</svg></body></html>
